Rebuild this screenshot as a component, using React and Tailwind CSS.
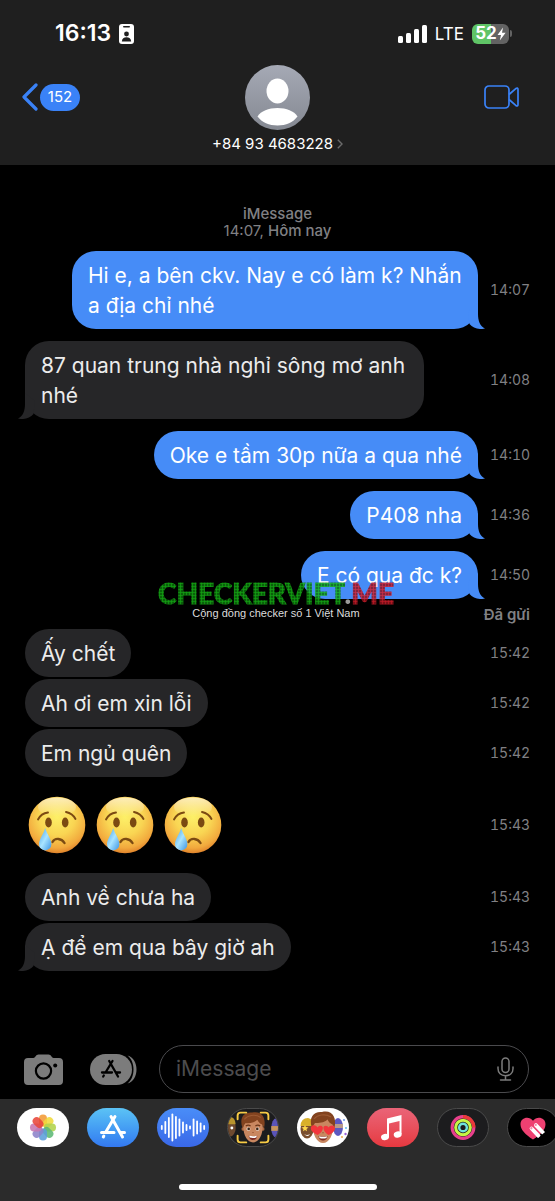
const messages = [
  { id: 1, mine: true, text: 'Hi e, a bên ckv. Nay e có làm k? Nhắn a địa chỉ nhé', time: '14:07', tail: true, gap: 'mt-3' },
  { id: 2, mine: false, text: '87 quan trung nhà nghỉ sông mơ anh nhé', time: '14:08', tail: true, gap: 'mt-3' },
  { id: 3, mine: true, text: 'Oke e tầm 30p nữa a qua nhé', time: '14:10', tail: true, gap: 'mt-3' },
  { id: 4, mine: true, text: 'P408 nha', time: '14:36', tail: true, gap: 'mt-3' },
  { id: 5, mine: true, text: 'E có qua đc k?', time: '14:50', tail: true, gap: 'mt-3', status: 'Đã gửi', stamp: true },
  { id: 6, mine: false, text: 'Ấy chết', time: '15:42', gap: '' },
  { id: 7, mine: false, text: 'Ah ơi em xin lỗi', time: '15:42', gap: 'mt-0.5' },
  { id: 8, mine: false, text: 'Em ngủ quên', time: '15:42', gap: 'mt-0.5' },
  { id: 9, mine: false, emoji: 3, time: '15:43', gap: 'mt-[19px]' },
  { id: 10, mine: false, text: 'Anh về chưa ha', time: '15:43', gap: 'mt-[19px]' },
  { id: 11, mine: false, text: 'Ạ để em qua bây giờ ah', time: '15:43', tail: true, gap: 'mt-0.5' },
]

const StatusBar = () => (
  <div className="flex h-[67px] items-center justify-between pl-[55px] pr-[43px]">
    <div className="flex items-center gap-2">
      <span className="text-[23px] font-semibold">16:13</span>
      <svg width="15" height="20" viewBox="0 0 15 20">
        <rect width="15" height="20" rx="3" fill="#fff" />
        <rect x="4" y="2" width="7" height="1.6" rx="0.8" fill="#1f1f1f" />
        <circle cx="7.5" cy="10" r="2.4" fill="#1f1f1f" />
        <path d="M2.8 17.5c.3-3 2-4.3 4.7-4.3s4.4 1.3 4.7 4.3z" fill="#1f1f1f" />
      </svg>
    </div>
    <div className="flex items-center gap-2">
      <svg width="29" height="18" viewBox="0 0 29 18" fill="#fff">
        <rect x="0" y="11" width="5" height="7" rx="1.5" />
        <rect x="8" y="8" width="5" height="10" rx="1.5" />
        <rect x="16" y="4" width="5" height="14" rx="1.5" />
        <rect x="24" y="0" width="5" height="18" rx="1.5" />
      </svg>
      <span className="text-[17px] leading-5">LTE</span>
      <div className="flex items-center gap-px">
        <div className="flex h-5 w-[37px] items-center justify-center rounded-md bg-linear-to-r from-[#5fc466] from-52% to-[#636363] to-52%">
          <span className="text-[17px] font-bold">52</span>
          <svg width="9" height="14" viewBox="0 0 9 14" fill="#fff">
            <path d="M6 0.5L0.5 8H4L2.8 13.5L8.6 5.7H5Z" />
          </svg>
        </div>
        <div className="h-[7px] w-0.5 rounded-r-full bg-[#636363]" />
      </div>
    </div>
  </div>
)

const Header = () => (
  <header className="h-[165px] shrink-0 bg-[#1f1f1f]">
    <StatusBar />
    <div className="grid grid-cols-3 items-start px-[22px]">
      <a href="#" aria-label="Back, 152 unread" className="mt-4 flex items-center gap-0.5 justify-self-start">
        <svg width="16" height="28" viewBox="0 0 16 28" fill="none" stroke="#3a82f7" strokeWidth="3.2" strokeLinecap="round" strokeLinejoin="round">
          <path d="M14 2L2 14L14 26" />
        </svg>
        <span className="flex h-[27px] w-10 items-center justify-center rounded-full bg-[#3a82f7] text-[15px]">152</span>
      </a>
      <button type="button" className="-mt-0.5 flex flex-col items-center justify-self-center">
        <svg width="65" height="65" viewBox="0 0 65 65">
          <defs>
            <linearGradient id="avatar" x1="0" y1="0" x2="0" y2="1">
              <stop offset="0" stopColor="#a5a9b5" />
              <stop offset="1" stopColor="#858992" />
            </linearGradient>
          </defs>
          <circle cx="32.5" cy="32.5" r="32.5" fill="url(#avatar)" />
          <ellipse cx="32.5" cy="26" rx="11" ry="12.5" fill="#fff" />
          <path d="M12.5 51.5C16 46 23.5 43 32.5 43S49 46 52.5 51.5C48 57.5 41 60.5 32.5 60.5S17 57.5 12.5 51.5Z" fill="#fff" />
        </svg>
        <span className="mt-1 flex items-center gap-1 whitespace-nowrap text-[15px] leading-5">
          +84 93 4683228
          <svg width="6" height="10" viewBox="0 0 6 10" fill="none" stroke="#6b6b6b" strokeWidth="1.4">
            <path d="M0.8 0.8L5 5L0.8 9.2" />
          </svg>
        </span>
      </button>
      <button type="button" aria-label="FaceTime" className="mr-[14px] mt-[18px] justify-self-end">
        <svg width="35" height="24" viewBox="0 0 35 24" fill="none" stroke="#3a82f7" strokeWidth="1.7" strokeLinejoin="round">
          <rect x="1" y="1" width="24" height="22" rx="4" />
          <path d="M25 9.5L31.5 3.8Q34 2 34 4.5V19.5Q34 22 31.5 20.2L25 14.5" />
        </svg>
      </button>
    </div>
  </header>
)

const Tail = ({ mine }) => (
  <svg
    width="20"
    height="26"
    viewBox="0 0 20 26"
    className={mine ? 'absolute bottom-0 -right-[7px] text-[#468cf7]' : 'absolute bottom-0 -left-[7px] -scale-x-100 text-[#262628]'}
  >
    <path d="M13 0V11C13 18 15 23 20 25.6C14 27 8 25 4.5 21L3 8Z" fill="currentColor" />
  </svg>
)

const CryingFace = () => (
  <svg width="58" height="58" viewBox="0 0 58 58" role="img" aria-label="😢">
    <defs>
      <radialGradient id="face" cx="0.5" cy="0.36" r="0.64">
        <stop offset="0" stopColor="#fdf068" />
        <stop offset="0.5" stopColor="#f9d553" />
        <stop offset="0.85" stopColor="#f2a93d" />
        <stop offset="1" stopColor="#e0832b" />
      </radialGradient>
      <linearGradient id="shine" x1="0" y1="0" x2="0" y2="1">
        <stop offset="0" stopColor="#fff" stopOpacity="0.6" />
        <stop offset="1" stopColor="#fff" stopOpacity="0" />
      </linearGradient>
      <linearGradient id="tear" x1="0" y1="0" x2="1" y2="1">
        <stop offset="0" stopColor="#3d9dea" />
        <stop offset="0.5" stopColor="#a9e4ff" />
        <stop offset="1" stopColor="#3a93e4" />
      </linearGradient>
    </defs>
    <circle cx="29" cy="29" r="28.3" fill="url(#face)" />
    <ellipse cx="29" cy="11" rx="19" ry="9.5" fill="url(#shine)" />
    <g fill="none" stroke="#7b4a12" strokeWidth="1.9" strokeLinecap="round">
      <path d="M10 23.5C12 19.5 15.5 17 20 16.5" />
      <path d="M38 16C42.5 17 45.5 19 47.5 23" />
      <path d="M24.5 46C27 41.5 33.5 42 36.5 47" strokeWidth="2.4" />
    </g>
    <ellipse cx="20.5" cy="26.5" rx="3.3" ry="5" fill="#7b4a12" />
    <ellipse cx="37.2" cy="26.5" rx="3.3" ry="5" fill="#7b4a12" />
    <path d="M17.2 32C15.5 38.5 11 43 11 48.2A6.2 6.2 0 0 0 23.4 48.2C23.4 43 19 38.5 17.2 32Z" fill="url(#tear)" />
  </svg>
)

const Watermark = () => (
  <div className="pointer-events-none absolute left-[133px] top-7 flex flex-col items-center whitespace-nowrap">
    <div className="font-['Lato'] text-[28px] font-black leading-7 opacity-85">
      <span className="bg-[radial-gradient(#16b816_40%,#074f07_80%)] bg-size-[3px_3px] bg-clip-text text-transparent [-webkit-text-stroke:1px_transparent]">
        CHECKERVIET
      </span>
      <span className="text-[#b5b5b5]">.</span>
      <span className="bg-[radial-gradient(#dc1f2d_40%,#6d0d16_80%)] bg-size-[3px_3px] bg-clip-text text-transparent [-webkit-text-stroke:1px_transparent]">
        ME
      </span>
    </div>
    <span className="font-['Liberation_Sans'] text-[11px] leading-3 text-[#dcdcdc]">Cộng đồng checker số 1 Việt Nam</span>
  </div>
)

const Message = ({ mine, text, emoji, time, tail, gap, status, stamp }) => (
  <li className={`relative ${gap}`}>
    <div className={`flex items-center gap-3 ${mine ? 'justify-end' : 'justify-between'}`}>
      {emoji ? (
        <div className="flex gap-2.5 pl-[3px]">
          {Array.from({ length: emoji }, (_, i) => (
            <CryingFace key={i} />
          ))}
        </div>
      ) : (
        <div
          className={`relative rounded-3xl px-4 pb-2 pt-2.5 text-[21px] leading-[30px] ${
            mine ? 'max-w-[406px] bg-[#468cf7] text-white' : 'max-w-[399px] bg-[#262628] text-[#ececec]'
          }`}
        >
          {text}
          {tail && <Tail mine={mine} />}
        </div>
      )}
      <time className="w-10 shrink-0 text-right text-sm tabular-nums text-[#808084]">{time}</time>
    </div>
    {status && <p className="pb-1 pt-1.5 text-right text-[15px] font-semibold leading-5 text-[#808084]">{status}</p>}
    {stamp && <Watermark />}
  </li>
)

const Composer = () => (
  <form className="flex items-center px-6 pb-1.5">
    <button type="button" aria-label="Camera">
      <svg width="39" height="31" viewBox="0 0 39 31">
        <path d="M4 4H9.5C11 4 12 0.5 14.5 0.5H24.5C27 0.5 28 4 29.5 4H35Q39 4 39 8V27Q39 31 35 31H4Q0 31 0 27V8Q0 4 4 4Z" fill="#7c7c7c" />
        <circle cx="19.5" cy="17" r="7.6" fill="none" stroke="#000" strokeWidth="2.2" />
        <circle cx="31.2" cy="11.5" r="2" fill="#000" />
      </svg>
    </button>
    <button type="button" aria-label="Apps" className="ml-[27px]">
      <svg width="48" height="31" viewBox="0 0 48 31">
        <rect width="42" height="31" rx="15.5" fill="#7c7c7c" />
        <path d="M37.5 1.5C49.5 5 49.5 26 37.5 29.5C45.5 23.5 45.5 7.5 37.5 1.5Z" fill="#7c7c7c" />
        <path
          d="M19.2 7L28 22.5M22.5 7L15.5 18.5M12 18.5H22M26.5 18.5H30M13.8 21.5L13.2 22.5"
          stroke="#000"
          strokeWidth="2.3"
          strokeLinecap="round"
          fill="none"
        />
      </svg>
    </button>
    <div className="ml-[21px] mr-0.5 flex h-12 min-w-0 flex-1 items-center rounded-full border border-[#4a4a4d] pl-4 pr-3.5">
      <input
        type="text"
        aria-label="Message"
        placeholder="iMessage"
        className="min-w-0 flex-1 bg-transparent text-[21px] text-white outline-none placeholder:text-[#4c4c4e]"
      />
      <button type="button" aria-label="Dictate">
        <svg width="17" height="24" viewBox="0 0 17 24" fill="none" stroke="#7c7c7c" strokeWidth="1.5" strokeLinecap="round">
          <rect x="5" y="1" width="7" height="14.5" rx="3.5" />
          <path d="M1 10V11.5C1 16 4 18.7 8.5 18.7S16 16 16 11.5V10M8.5 18.7V23M3.5 23H13.5" />
        </svg>
      </button>
    </div>
  </form>
)

const petals = ['#f39a35', '#f0d93c', '#b2d34b', '#5db875', '#5c9edb', '#8c83c9', '#c777b0', '#e8473a']

const PhotosIcon = () => (
  <svg width="52" height="39" viewBox="0 0 52 39">
    {petals.map((color, i) => (
      <rect key={color} x="22" y="6.5" width="8" height="12" rx="4" fill={color} opacity="0.88" transform={`rotate(${i * 45} 26 19.5)`} />
    ))}
  </svg>
)

const StoreIcon = () => (
  <svg width="52" height="39" viewBox="0 0 52 39" fill="none" stroke="#fff" strokeWidth="3" strokeLinecap="round">
    <path d="M24 8.5L35.5 29M28 8.5L18.5 24.5M14.5 24.5H27M33.5 24.5H37.5M16.8 28L16.3 29" />
  </svg>
)

const AudioIcon = () => (
  <svg width="52" height="39" viewBox="0 0 52 39" stroke="#fff" strokeWidth="1.8" strokeLinecap="round">
    {[3, 11, 19, 26, 21, 16, 10, 5, 2, 16, 12, 8, 3].map((h, i) => (
      <line key={i} x1={4.8 + i * 3.53} x2={4.8 + i * 3.53} y1={19.5 - h / 2} y2={19.5 + h / 2} />
    ))}
  </svg>
)

const Face = ({ hearts }) => (
  <g>
    <circle cx="16" cy="21" r="2" fill="#a8653f" />
    <circle cx="36" cy="21" r="2" fill="#a8653f" />
    <path d="M16 15C15 27 20 35 26 35S37 27 36 15C34 9 18 9 16 15Z" fill="#c98760" />
    <path d="M15 20C11 8 18 3 25 4C35 1.5 40 9 37.5 20L35.5 16.5C33 15.5 31.5 13.5 30.5 11.5C27 15 21.5 15 18 15C17 16.5 16 18 15 20Z" fill="#83431f" />
    <path d="M17 11C20 7 28 5 34 9" stroke="#9c5a33" strokeWidth="1.2" fill="none" />
    {hearts ? (
      <g fill="#f2353c">
        <path d="M20.5 27C14 24 12 19.5 15.5 17.5C18 16.5 19.8 18 20.5 19.5C21.5 17.5 24.5 17 25.7 19C26.5 22 24 25 20.5 27Z" />
        <path d="M31.5 27C27 24 25.5 20 27 18.2C29 17 30.8 18 31.5 19.5C32.5 17.5 36 16.5 37.5 18.5C39 22 36 25.5 31.5 27Z" />
      </g>
    ) : (
      <g>
        <path d="M18.5 18Q21 16 23.5 18M28.5 18Q31 16 33.5 18" stroke="#6b3518" strokeWidth="1.2" fill="none" />
        <ellipse cx="21.3" cy="21" rx="2" ry="1.8" fill="#fff" />
        <ellipse cx="30.7" cy="21" rx="2" ry="1.8" fill="#fff" />
        <circle cx="21.5" cy="21" r="1.4" fill="#3d2413" />
        <circle cx="30.5" cy="21" r="1.4" fill="#3d2413" />
      </g>
    )}
    <path d="M25 24.5Q26 25.5 27 24.5" stroke="#a8623f" fill="none" />
    <path d="M21.5 28Q26 29 30.5 28C30 31.5 28 32.5 26 32.5S22 31.5 21.5 28Z" fill="#7d2b24" />
    <path d="M22 28.2Q26 29.2 30 28.2L29.5 30Q26 31 22.5 30Z" fill="#fff" />
  </g>
)

const MemojiIcon = () => (
  <svg width="52" height="39" viewBox="0 0 52 39">
    <ellipse cx="2" cy="20" rx="6" ry="9" fill="#6e4a30" />
    <path d="M0 9Q7 7 8 16H0Z" fill="#b8942e" />
    <circle cx="4" cy="20" r="1.5" fill="#fff" />
    <ellipse cx="50" cy="20" rx="5" ry="10" fill="#5a54b8" />
    <rect x="45" y="18" width="7" height="5" fill="#c7955c" />
    <Face />
    <path d="M10 11V7Q10 4 13 4H19M34 4H39Q42 4 42 7V11M42 28V32Q42 35 39 35H34M19 35H13Q10 35 10 32V28" fill="none" stroke="#f7cb45" strokeWidth="2" strokeLinecap="round" />
  </svg>
)

const StickersIcon = () => (
  <svg width="52" height="39" viewBox="0 0 52 39">
    <ellipse cx="10" cy="21" rx="6.5" ry="9.5" fill="#7a4e2e" />
    <path d="M3.5 18Q4 10 11 10Q17 11 17 18Z" fill="#d9b02a" />
    <path d="M4.5 19.5l2.5-.5 1-2 1 2 2.5.5-2 1.5.5 2.2-2-1.2-2 1.2.5-2.2z" fill="#ffd84a" />
    <path d="M7 26Q10 28 13 26Q11 30 7 26Z" fill="#fff" />
    <ellipse cx="41" cy="19" rx="5" ry="9" fill="#5d58c0" />
    <rect x="37" y="16" width="9" height="4" fill="#b99a8a" />
    <circle cx="47" cy="12" r="0.9" fill="#5a8ae6" />
    <circle cx="45" cy="29" r="0.9" fill="#f2a33a" />
    <circle cx="49" cy="20" r="0.9" fill="#53b6ea" />
    <circle cx="48.5" cy="26" r="1.2" fill="#9b62d8" />
    <Face hearts />
  </svg>
)

const MusicIcon = () => (
  <svg width="52" height="39" viewBox="0 0 52 39" fill="#fff">
    <path d="M20 10.5L34.5 7V26H32.5V13L22 15.5V29H20Z" />
    <ellipse cx="18" cy="29" rx="4" ry="3.2" transform="rotate(-15 18 29)" />
    <ellipse cx="30.7" cy="26.5" rx="4" ry="3.2" transform="rotate(-15 30.7 26.5)" />
  </svg>
)

const FitnessIcon = () => (
  <svg width="52" height="39" viewBox="0 0 52 39" fill="none" strokeWidth="3.2">
    <circle cx="26" cy="19.5" r="11.3" stroke="#e8408c" />
    <path d="M26 8.2A11.3 11.3 0 0 1 37.3 19.5" stroke="#ea3a38" />
    <circle cx="26" cy="19.5" r="7.6" stroke="#c6f545" />
    <circle cx="26" cy="19.5" r="4" stroke="#6fe3dc" strokeWidth="2.6" />
  </svg>
)

const TouchIcon = () => (
  <svg width="52" height="39" viewBox="0 0 52 39">
    <path d="M26 32C18 26.5 13 22 13 16C13 9 22 7 26 12.5C30 7 39 9 39 16C39 22 34 26.5 26 32Z" fill="#ee4071" />
    <path d="M24.5 20.5L32 28.5M29 17L37 25.5" stroke="#fff" strokeWidth="4" strokeLinecap="round" />
    <path d="M29 32.5L40 23V34H29Z" fill="#000" />
    <circle cx="24.3" cy="20.3" r="1.2" fill="#ee4071" opacity="0.6" />
    <circle cx="28.8" cy="16.8" r="1.2" fill="#ee4071" opacity="0.6" />
  </svg>
)

const apps = [
  { name: 'Photos', style: 'bg-white', Icon: PhotosIcon },
  { name: 'App Store', style: 'bg-linear-to-b from-[#5cc3f5] to-[#3478f0]', Icon: StoreIcon },
  { name: 'Audio', style: 'bg-linear-to-b from-[#4a8df8] to-[#3a68e8]', Icon: AudioIcon },
  { name: 'Memoji', style: 'bg-[#1c1c1e] border border-[#4a4a4a]', Icon: MemojiIcon },
  { name: 'Stickers', style: 'bg-white', Icon: StickersIcon },
  { name: 'Music', style: 'bg-linear-to-b from-[#ea6478] to-[#e6383f]', Icon: MusicIcon },
  { name: 'Fitness', style: 'bg-[#1c1c1e] border border-[#4a4a4a]', Icon: FitnessIcon },
  { name: 'Digital Touch', style: 'bg-black border border-[#4a4a4a]', Icon: TouchIcon },
]

const AppDrawer = () => (
  <footer className="flex h-[102px] shrink-0 flex-col justify-between bg-[#2b2b2b] pb-[11px] pt-[9px]">
    <nav className="flex gap-[18px] overflow-hidden pl-[17px]">
      {apps.map(({ name, style, Icon }) => (
        <button
          key={name}
          type="button"
          aria-label={name}
          className={`flex h-[39px] w-[52px] shrink-0 items-center justify-center overflow-hidden rounded-full ${style}`}
        >
          <Icon />
        </button>
      ))}
    </nav>
    <div className="mx-auto h-1.5 w-[198px] rounded-full bg-white" />
  </footer>
)

export default function App() {
  return (
    <div className="flex min-h-screen flex-col overflow-hidden bg-black font-['Inter',sans-serif] text-white">
      <Header />
      <main className="flex-1 px-[25px] pt-10">
        <div className="text-center text-[15px] leading-[17px] text-[#808084]">
          <p className="font-medium">iMessage</p>
          <p>
            14:07, <span className="font-medium">Hôm nay</span>
          </p>
        </div>
        <ul>
          {messages.map((message) => (
            <Message key={message.id} {...message} />
          ))}
        </ul>
      </main>
      <Composer />
      <AppDrawer />
    </div>
  )
}
